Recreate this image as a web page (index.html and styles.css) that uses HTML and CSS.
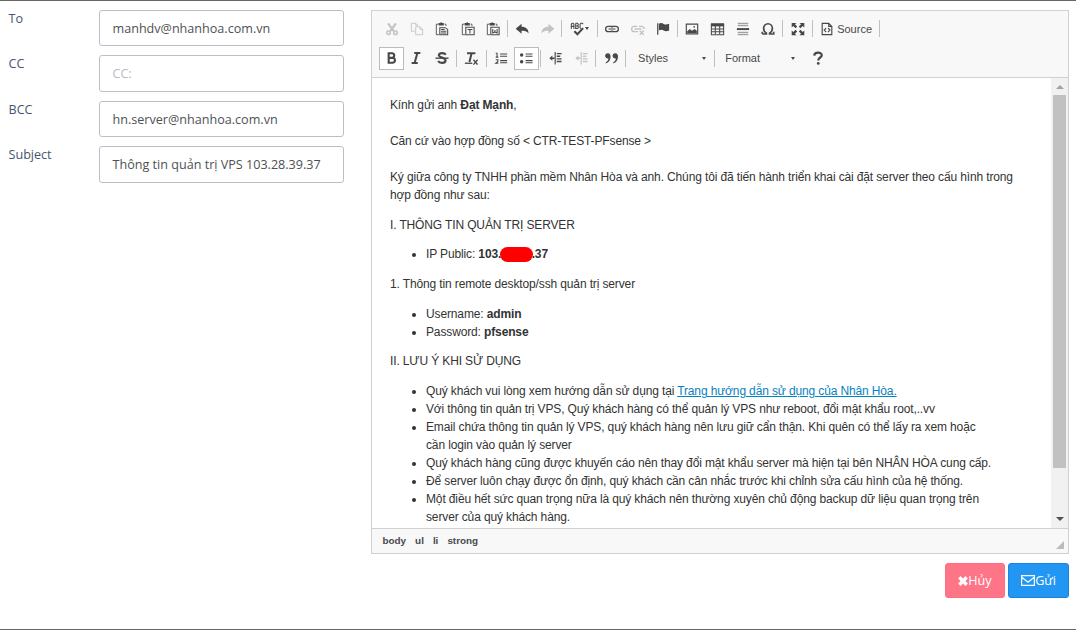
FILE: index.html
```html
<!DOCTYPE html>
<html lang="vi">
<head>
<meta charset="utf-8">
<title>Email</title>
<link rel="stylesheet" href="styles.css">
</head>
<body>
<main class="dialog">
  <section class="fields">
    <label class="field"><span class="field-label">To</span><span class="input"><span class="to">manhdv@nhanhoa.com.vn</span></span></label>
    <label class="field"><span class="field-label">CC</span><span class="input placeholder"><span>CC:</span></span></label>
    <label class="field"><span class="field-label">BCC</span><span class="input"><span>hn.server@nhanhoa.com.vn</span></span></label>
    <label class="field"><span class="field-label">Subject</span><span class="input"><span>Thông tin quản trị VPS 103.28.39.37</span></span></label>
  </section>
  <section class="compose">
    <div class="editor">
      <div class="toolbar">
        <div class="tools">
          <span class="tool off"><svg viewBox="0 0 16 16"><path d="M3.500 1.500l6.500 9M12.500 1.500L6 10.500" stroke="currentColor" stroke-width="2.500" fill="none"/><circle cx="4" cy="12.200" r="2" fill="none" stroke="currentColor" stroke-width="1.800"/><circle cx="12" cy="12.200" r="2" fill="none" stroke="currentColor" stroke-width="1.800"/></svg></span>
          <span class="tool off"><svg viewBox="0 0 16 16"><path d="M5.500 10.500h-4v-9h5l2 2v1M6.500 1.500v2h2M6.500 5.500h5l3 3v6h-8zM11.500 5.500v3h3" fill="none" stroke="currentColor"/></svg></span>
          <span class="tool"><svg viewBox="0 0 16 16"><path d="M4.500 14.500h-3v-12h2M11 2.500h1.500v2" fill="none" stroke="currentColor"/><path d="M4 1h2l1-1 1 1h2v3H4z" fill="currentColor"/><path d="M5.500 6.500h6l3 2v6h-9zM7 8.500h4M7 10.500h6M7 12.500h6" fill="none" stroke="currentColor" stroke-width="1.200"/></svg></span>
          <span class="tool"><svg viewBox="0 0 16 16"><path d="M4.500 14.500h-3v-12h2M11 2.500h1.500v2" fill="none" stroke="currentColor"/><path d="M4 1h2l1-1 1 1h2v3H4z" fill="currentColor"/><path d="M5.500 6h9.500v8.500H5.500zM7.500 8.500h5.500M10.200 8.500V13" fill="none" stroke="currentColor" stroke-width="1.200"/></svg></span>
          <span class="tool"><svg viewBox="0 0 16 16"><path d="M4.500 14.500h-3v-12h2M11 2.500h1.500v2" fill="none" stroke="currentColor"/><path d="M4 1h2l1-1 1 1h2v3H4z" fill="currentColor"/><path d="M5.500 6h9.500v8.500H5.500zM7.700 8v4.500l2.500-1 2.500 1V8M10.200 9v3" fill="none" stroke="currentColor" stroke-width="1.200"/></svg></span>
          <i class="sep"></i>
          <span class="tool"><svg viewBox="0 0 16 16"><path d="M.8 7.700L7.500 2v3.500c5 0 7.800 2.500 8 7.500-2-2.500-4.500-3-8-3v3.300z" fill="currentColor"/></svg></span>
          <span class="tool off"><svg viewBox="0 0 16 16"><path d="M15.200 7.700L8.500 2v3.500c-5 0-7.800 2.500-8 7.500 2-2.500 4.500-3 8-3v3.300z" fill="currentColor"/></svg></span>
          <i class="sep"></i>
          <span class="tool spell"><svg viewBox="0 0 16 16"><path d="M1.500 8V2.500L2.500 1.500h1L4.500 2.500V8M1.500 5h3M6.500 1.500v6h2l1-1V5.500l-1-1h-2M8.500 4.500l1-1v-1l-1-1h-2M15 2.500l-1-1h-1.500l-1 1v4l1 1" fill="none" stroke="currentColor" stroke-width="1.200"/><path d="M5 10.500l3.500 3.500L15 7" fill="none" stroke="currentColor" stroke-width="2.400"/></svg><b class="caret"></b></span>
          <i class="sep"></i>
          <span class="tool"><svg viewBox="0 0 16 16"><path d="M7 5H3.700a3 3 0 0 0 0 6H7M9 5h3.300a3 3 0 0 1 0 6H9" fill="none" stroke="currentColor" stroke-width="1.500"/><path d="M4 8h8M7.300 4.300v2M7.300 9.700v2M8.800 4.300v2M8.800 9.700v2" stroke="currentColor" stroke-width="1.300"/></svg></span>
          <span class="tool off"><svg viewBox="0 0 16 16"><path d="M7 5H3.700a3 3 0 0 0 0 6H8M9 5h3.300a3 3 0 0 1 2.700 3M4 8h8" fill="none" stroke="currentColor" stroke-width="1.500"/><path d="M10 10l4.500 4.500M14.500 10L10 14.500" stroke="currentColor" stroke-width="1.600"/></svg></span>
          <span class="tool"><svg viewBox="0 0 16 16"><path d="M2 1.500v13" stroke="currentColor" stroke-width="1.400"/><path d="M3.300 2c2-1.200 4-.8 5.500.2 1.700 1 3.700.7 6.200-.2v7.800c-2 .8-4.500 1-6.200 0-1.500-1-3.500-1.200-5.500 0z" fill="currentColor"/></svg></span>
          <i class="sep"></i>
          <span class="tool"><svg viewBox="0 0 16 16"><path d="M1.500 2.500h13v11h-13z" fill="none" stroke="currentColor" stroke-width="1.300"/><path d="M2.500 12.500v-2l3-2.500 2.500 2L11 8l2.500 2v2.500z" fill="currentColor"/><circle cx="10.500" cy="5.500" r="1" fill="currentColor"/></svg></span>
          <span class="tool"><svg class="wide" viewBox="0 0 16 16"><path d="M1 2.500h14v12H1z" fill="none" stroke="currentColor" stroke-width="1.200"/><path d="M.5 1.500h15V5H.5z" fill="currentColor"/><path d="M5.500 4v10M10.500 4v10M1 8h14M1 11.200h14" stroke="currentColor" stroke-width="1.200"/></svg></span>
          <span class="tool"><svg viewBox="0 0 16 16"><path d="M2 1.500h12M2 4h12M2 12h12M2 14.500h12" stroke="#a2a2a2" stroke-width="1.500"/><path d="M1 7h14v2.200H1z" fill="currentColor"/></svg></span>
          <span class="tool"><svg viewBox="0 0 16 16"><path d="M1.500 13.700h4.700v-1C4 11.200 3 9.200 3 7A5 5 0 0 1 13 7c0 2.200-1 4.200-3.200 5.700v1h4.700V11M1.500 13.700V11" fill="none" stroke="currentColor" stroke-width="1.900"/></svg></span>
          <i class="sep"></i>
          <span class="tool"><svg viewBox="0 0 16 16"><path d="M.8 1h5.500L4.500 2.700l2.600 2.500-1.900 1.900L2.600 4.500.8 6.300zM15.200 1H9.700l1.800 1.700-2.600 2.500 1.900 1.900 2.600-2.600 1.800 1.800zM.8 15h5.500l-1.800-1.700 2.600-2.500-1.900-1.900-2.600 2.600L.8 9.700zM15.200 15H9.700l1.800-1.700-2.600-2.500 1.900-1.900 2.600 2.600 1.800-1.800z" fill="currentColor"/></svg></span>
          <i class="sep"></i>
          <span class="tool source"><svg viewBox="0 0 16 16"><path d="M2.500 1.500h7.500l3.500 3.500v9.500h-11zM10 1.500V5h3.500M7 7L4.800 9.200 7 11.400M9.200 7l2.200 2.200-2.200 2.200" fill="none" stroke="currentColor" stroke-width="1.300"/></svg>Source</span>
          <i class="sep"></i>
        </div>
        <div class="tools">
          <span class="tool on"><svg viewBox="0 0 16 16"><path d="M4.200 2.500h4.200a2.700 2.700 0 0 1 0 5.300H4.200zM4.200 7.800h4.800a2.900 2.900 0 0 1 0 5.700H4.200z" fill="none" stroke="currentColor" stroke-width="2.400"/></svg></span>
          <span class="tool"><svg class="shift" viewBox="0 0 16 16"><path d="M6 2.300h7M3 13.700h7M9.700 2L6.300 14" fill="none" stroke="currentColor" stroke-width="2.300"/></svg></span>
          <span class="tool"><svg viewBox="0 0 16 16"><path d="M12.300 4.300C11 2 5 1.500 4.400 4.700c-.3 2.800 7.500 2.500 7.700 6C12 14.500 5 14.200 3.600 11.500" fill="none" stroke="currentColor" stroke-width="2.400"/><path d="M.5 8.200h15" stroke="currentColor" stroke-width="1.600"/></svg></span>
          <i class="sep"></i>
          <span class="tool"><svg class="shift" viewBox="0 0 16 16"><path d="M3.500 2.500h9.500M8.700 2.500L6.200 12.500" stroke="currentColor" stroke-width="2.300"/><path d="M1 14h8.500" stroke="currentColor" stroke-width="1.500"/><path d="M10.800 10l4.700 5.500M15.500 10l-4.700 5.500" stroke="currentColor" stroke-width="1.500"/></svg></span>
          <i class="sep"></i>
          <span class="tool"><svg viewBox="0 0 16 16"><path d="M7 3.500h8M7 6h8M7 11h8M7 13.500h8" stroke="currentColor" stroke-width="1.200"/><path d="M2 2.500h1.500v4.200M2 7h3M2 10h2.500v2L2 14h3" fill="none" stroke="currentColor" stroke-width="1.200"/></svg></span>
          <span class="tool on"><svg class="shift" viewBox="0 0 16 16"><path d="M7.500 3.500h8M7.500 6h8M7.500 11h8M7.500 13.500h8" stroke="currentColor" stroke-width="1.200"/><circle cx="3" cy="4.700" r="2" fill="currentColor"/><circle cx="3" cy="12.200" r="2" fill="currentColor"/></svg></span>
          <i class="sep"></i>
          <span class="tool"><svg class="shift" viewBox="0 0 16 16"><path d="M8.200 1v14.500" stroke="currentColor" stroke-width="1.300"/><path d="M10 3h5.500M10 6h4M10 9h5.500M10 12h5.500M7.500 8.200H4" stroke="currentColor" stroke-width="1.600"/><path d="M1.500 8.200l3.500-3v6z" fill="currentColor"/></svg></span>
          <span class="tool off"><svg viewBox="0 0 16 16"><path d="M8.200 1v14.500" stroke="currentColor" stroke-width="1.300"/><path d="M10 3h5.500M10 6h4M10 9h5.500M10 12h5.500M7.500 8.200H4" stroke="currentColor" stroke-width="1.600"/><path d="M1.500 8.200l3.500-3v6z" fill="currentColor"/></svg></span>
          <i class="sep"></i>
          <span class="tool"><svg viewBox="0 0 16 16"><path d="M4.500 2.500a3 3 0 1 0 .5 5.900C5 10.500 4 12 2 13v1.300C5.500 13 7.500 10 7.500 6.500 7.500 4.200 6.500 2.500 4.500 2.500zM13 2.500a3 3 0 1 0 .5 5.900c0 2.100-1 3.600-3 4.600v1.300C14 13 16 10 16 6.500c0-2.300-1-4-3-4z" fill="currentColor"/></svg></span>
          <i class="sep"></i>
          <span class="combo">Styles<b class="caret"></b></span>
          <i class="sep"></i>
          <span class="combo format">Format<b class="caret"></b></span>
          <span class="tool help"><svg viewBox="0 0 16 16"><path d="M3.700 5.300C4 .8 12.500.8 12.300 5 12.200 7.500 8.300 7.500 8.300 10.800" fill="none" stroke="currentColor" stroke-width="2.500"/><circle cx="8.300" cy="14.200" r="1.600" fill="currentColor"/></svg></span>
        </div>
      </div>
      <div class="body">
        <div class="content">
          <p>Kính gửi anh <strong>Đạt Mạnh</strong>,<br><br>Căn cứ vào hợp đồng số &lt; CTR-TEST-PFsense &gt;<br><br>Ký giữa công ty TNHH phần mềm Nhân Hòa và anh. Chúng tôi đã tiến hành triển khai cài đặt server theo cấu hình trong<br>hợp đồng như sau:</p>
          <p>I. THÔNG TIN QUẢN TRỊ SERVER</p>
          <ul><li>IP Public: <strong>103.<span class="redacted"></span>.37</strong></li></ul>
          <p>1. Thông tin remote desktop/ssh quản trị server</p>
          <ul><li>Username: <strong>admin</strong></li><li>Password: <strong>pfsense</strong></li></ul>
          <p>II. LƯU Ý KHI SỬ DỤNG</p>
          <ul>
            <li>Quý khách vui lòng xem hướng dẫn sử dụng tại <a>Trang hướng dẫn sử dụng của Nhân Hòa.</a></li>
            <li>Với thông tin quản trị VPS, Quý khách hàng có thể quản lý VPS như reboot, đổi mật khẩu root,..vv</li>
            <li>Email chứa thông tin quản lý VPS, quý khách hàng nên lưu giữ cẩn thận. Khi quên có thể lấy ra xem hoặc<br>cần login vào quản lý server</li>
            <li>Quý khách hàng cũng được khuyến cáo nên thay đổi mật khẩu server mà hiện tại bên NHÂN HÒA cung cấp.</li>
            <li>Để server luôn chạy được ổn định, quý khách cần cân nhắc trước khi chỉnh sửa cấu hình của hệ thống.</li>
            <li>Một điều hết sức quan trọng nữa là quý khách nên thường xuyên chủ động backup dữ liệu quan trọng trên<br>server của quý khách hàng.</li>
            <li>Mọi vấn đề vui lòng liên hệ số</li>
          </ul>
        </div>
        <div class="scrollbar"><i class="up"></i><i class="thumb"></i><i class="down"></i></div>
      </div>
      <div class="status"><span>body</span><span>ul</span><span>li</span><span>strong</span><i class="grip"></i></div>
    </div>
    <div class="actions">
      <button class="btn cancel"><svg class="x" viewBox="0 0 10 10"><path d="M1.300 1.300l7.400 7.400M8.700 1.300l-7.400 7.400" stroke="currentColor" stroke-width="3.400"/></svg>Hủy</button>
      <button class="btn send"><svg class="mail" viewBox="0 0 14 11"><path d="M.6.6h12.800v9.800H.6zM.8 2.200L7 7.200l6.200-5" fill="none" stroke="currentColor" stroke-width="1.200"/></svg>Gửi</button>
    </div>
  </section>
</main>
</body>
</html>
```
FILE: styles.css
```css
* { box-sizing: border-box; }
body { margin: 0; background: #fff; }
.dialog {
  display: flex;
  height: 630px;
  padding: 9px 7px 0 8.500px;
  border-top: 1px solid #666;
  border-bottom: 1px solid #666;
  overflow: hidden;
}
.fields { width: 362.500px; flex: none; font-family: "Open Sans", sans-serif; font-size: 13px; }
.field { display: flex; height: 45.4px; color: #475570; }
.field-label { width: 90.500px; flex: none; line-height: 17px; font-size: 12.6px; }
.input {
  display: flex;
  align-items: center;
  width: 245px;
  height: 36.400px;
  padding-left: 12.500px;
  border: 1px solid #babfc7;
  border-radius: 3px;
  color: #4e5154;
  font-size: 12.6px;
}
.field:first-child .input { height: 36px; }
.field:nth-child(3) .input { padding-top: 1px; }
.placeholder { color: #b8bcc2; }
.compose { width: 698px; flex: none; }
.editor {
  height: 544px;
  border: 1px solid #d1d1d1;
  font-family: "Liberation Sans", Arial, sans-serif;
}
.toolbar { height: 67px; padding: 5px 0 0 7px; background: #f8f8f8; border-bottom: 1px solid #d1d1d1; }
.tools { display: flex; align-items: center; height: 25px; margin-bottom: 4.500px; color: #484848; }
.tool { display: flex; align-items: center; justify-content: center; width: 25.300px; height: 23px; flex: none; }
.tool svg { width: 14px; height: 14px; flex: none; }
.tool .wide { width: 15px; }
.tool .shift { margin-right: 1.500px; }
.off { color: #c3c3c3; }
.on { background: #fff; border: 1px solid #bcbcbc; }
.sep { width: 1px; height: 17px; margin: 0 2px 0 1.200px; background: #c0c0c0; flex: none; }
.caret { width: 0; height: 0; border: 2.500px solid transparent; border-top: 3px solid #484848; border-bottom: 0; }
.spell { width: 31px; gap: 1px; }
.source { width: 63px; gap: 3px; font-size: 11px; color: #484848; }
.combo { display: flex; align-items: center; justify-content: space-between; width: 84.900px; padding: 0 7px 0 10.500px; font-size: 11px; }
.format { padding-left: 8.500px; }
.help { margin-left: 3.500px; }
.body { display: flex; height: 450px; overflow: hidden; }
.content { width: 679px; padding: 18px 0 0 18px; font-size: 12px; letter-spacing: -.133px; line-height: 18px; color: #333; white-space: nowrap; overflow: hidden; }
.content p { margin: 0 0 11.700px; }
.content ul { margin: 0 0 11.700px; padding-left: 36px; }
.content a { color: #0782c1; text-decoration: underline; }
.redacted { display: inline-block; width: 33px; height: 15px; border-radius: 8px; background: #f00; vertical-align: -4px; margin: -2px -1.500px 0 -1px; }
.scrollbar { display: flex; flex-direction: column; align-items: center; width: 17px; background: #f1f1f1; }
.up, .down { width: 0; height: 0; border: 4px solid transparent; flex: none; }
.up { margin-top: 7px; border-top: 0; border-bottom-color: #a3a3a3; }
.thumb { width: 13px; height: 373px; margin: 6px 0 49px; background: #c1c1c1; flex: none; }
.down { border-bottom: 0; border-top-color: #505050; }
.status { position: relative; display: flex; gap: 9px; height: 25px; padding: 6px 10.500px; border-top: 1px solid #d1d1d1; background: #f8f8f8; color: #484848; font-size: 9.900px; font-weight: bold; line-height: 12px; }
.grip { position: absolute; right: 4px; bottom: 4px; border: 4.500px solid #bcbcbc; border-top-color: transparent; border-left-color: transparent; }
.actions { display: flex; justify-content: flex-end; gap: 3px; padding-top: 9px; }
.btn { display: flex; align-items: center; justify-content: center; height: 35px; padding: 0; border: 1px solid; border-radius: 3px; color: #fff; font: 12.600px "Open Sans", sans-serif; }
.cancel { width: 60px; background: #ff7588; border-color: #ff6d82; }
.send { width: 61px; background: #2196f3; border-color: #1c82dc; }
.x { width: 10px; height: 10px; }
.mail { width: 14px; height: 11px; }
```
